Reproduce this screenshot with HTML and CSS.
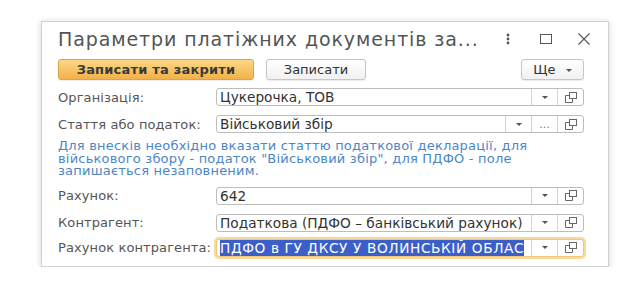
FILE: index.html
```html
<!doctype html>
<html>
<head>
<meta charset="utf-8">
<link rel="stylesheet" href="styles.css">
</head>
<body>
<div class="window">
	<div class="head">
		<div class="title">Параметри платіжних документів за...</div>
		<div class="head_btns">
			<svg class="h_more" width="4" height="12" viewBox="0 0 4 12"><circle cx="2" cy="2" r="1.4" fill="#555"/><circle cx="2" cy="6" r="1.4" fill="#555"/><circle cx="2" cy="10" r="1.4" fill="#555"/></svg>
			<svg class="h_max" width="12" height="10" viewBox="0 0 12 10"><rect x="0.5" y="0.5" width="11" height="9" fill="none" stroke="#555"/></svg>
			<svg class="h_close" width="12" height="12" viewBox="0 0 12 12"><path d="M0.5 0.5 L11.5 11.5 M11.5 0.5 L0.5 11.5" stroke="#555" stroke-width="1.1"/></svg>
		</div>
	</div>
	<div class="toolbar">
		<div class="btn btn_main">Записати та закрити</div>
		<div class="btn btn_save">Записати</div>
		<div class="btn btn_more">Ще <span class="arrow"></span></div>
	</div>
	<div class="form">
		<div class="row">
			<div class="label">Організація:</div>
			<div class="field">
				<div class="value">Цукерочка, ТОВ</div>
				<div class="fbtn"><span class="arrow"></span></div>
				<div class="fbtn"><svg class="open" width="12" height="11" viewBox="0 0 12 11"><rect x="4.5" y="0.5" width="7" height="6" fill="none" stroke="#666"/><path d="M4.5 3.5 H0.5 V10.5 H7.5 V6.5" fill="none" stroke="#666"/></svg></div>
			</div>
		</div>
		<div class="row">
			<div class="label">Стаття або податок:</div>
			<div class="field">
				<div class="value">Військовий збір</div>
				<div class="fbtn"><span class="arrow"></span></div>
				<div class="fbtn dots">...</div>
				<div class="fbtn"><svg class="open" width="12" height="11" viewBox="0 0 12 11"><rect x="4.5" y="0.5" width="7" height="6" fill="none" stroke="#666"/><path d="M4.5 3.5 H0.5 V10.5 H7.5 V6.5" fill="none" stroke="#666"/></svg></div>
			</div>
		</div>
		<div class="info">Для внесків необхідно вказати статтю податкової декларації, для військового збору - податок "Військовий збір", для ПДФО - поле запишається незаповненим.</div>
		<div class="row">
			<div class="label">Рахунок:</div>
			<div class="field">
				<div class="value">642</div>
				<div class="fbtn"><span class="arrow"></span></div>
				<div class="fbtn"><svg class="open" width="12" height="11" viewBox="0 0 12 11"><rect x="4.5" y="0.5" width="7" height="6" fill="none" stroke="#666"/><path d="M4.5 3.5 H0.5 V10.5 H7.5 V6.5" fill="none" stroke="#666"/></svg></div>
			</div>
		</div>
		<div class="row">
			<div class="label">Контрагент:</div>
			<div class="field">
				<div class="value">Податкова (ПДФО – банківський рахунок)</div>
				<div class="fbtn"><span class="arrow"></span></div>
				<div class="fbtn"><svg class="open" width="12" height="11" viewBox="0 0 12 11"><rect x="4.5" y="0.5" width="7" height="6" fill="none" stroke="#666"/><path d="M4.5 3.5 H0.5 V10.5 H7.5 V6.5" fill="none" stroke="#666"/></svg></div>
			</div>
		</div>
		<div class="row row_focus">
			<div class="label">Рахунок контрагента:</div>
			<div class="field focus">
				<div class="value"><span class="sel">ПДФО в ГУ ДКСУ У ВОЛИНСЬКІЙ ОБЛАС</span></div>
				<div class="fbtn"><span class="arrow"></span></div>
				<div class="fbtn"><svg class="open" width="12" height="11" viewBox="0 0 12 11"><rect x="4.5" y="0.5" width="7" height="6" fill="none" stroke="#666"/><path d="M4.5 3.5 H0.5 V10.5 H7.5 V6.5" fill="none" stroke="#666"/></svg></div>
			</div>
		</div>
	</div>
</div>
</body>
</html>
```

FILE: styles.css
```css
*{margin:0; padding:0; box-sizing:border-box;}
body{background:#fff; font-family:"DejaVu Sans", "Liberation Sans", sans-serif; color:#4d4d4d;}

.window{margin:21px 0 0 41px; width:568px; height:246px; background:#fff; border:1px solid #d2d2d2; box-shadow:0 1px 6px rgba(0,0,0,.18); padding:0 24px 0 16px;}

.head{display:flex; align-items:center; height:34px;}
.title{flex:1; font-size:19px; color:#555; white-space:nowrap; letter-spacing:0.9px;}
.head_btns{display:flex; align-items:center;}
.h_more{margin-right:30px;}
.h_max{margin-right:26px;}
.h_close{margin-right:-6px;}

.toolbar{display:flex; height:21px; margin-top:3px;}
.btn{height:21px; line-height:19px; font-size:13px; color:#333; text-align:center; border:1px solid #c6c6c6; border-radius:3px; background:linear-gradient(#fff,#f1f1f1); box-shadow:0 1px 1px rgba(0,0,0,.08);}
.btn_main{width:196px; font-weight:bold; letter-spacing:0.2px; color:#3a3a3a; border-color:#d9a24c; background:linear-gradient(#fcd886,#f2b148);}
.btn_save{width:100px; margin-left:12px;}
.btn_more{width:63px; margin-left:auto;}
.btn_more .arrow{margin-left:6px; vertical-align:middle;}

.arrow{display:inline-block; width:0; height:0; border-left:3px solid transparent; border-right:3px solid transparent; border-top:3px solid #555;}

.form{display:flex; flex-direction:column; gap:9px; margin-top:8px;}
.row{display:flex; align-items:center; height:18px;}
.label{width:158px; flex-shrink:0; font-size:13px; color:#555; white-space:nowrap; letter-spacing:0.1px;}
.field{flex:1; min-width:0; display:flex; height:18px; border:1px solid #bdbdbd; border-radius:3px; background:#fff;}
.value{flex:1; min-width:0; overflow:hidden; white-space:nowrap; font-size:13.7px; line-height:16px; color:#333; padding-left:3px;}
.fbtn{width:26px; flex-shrink:0; display:flex; align-items:center; justify-content:center; border-left:1px solid #d4d4d4;}
.dots{font-size:11px; color:#777; align-items:flex-end; line-height:14px;}

.info{font-size:13px; line-height:12.5px; letter-spacing:0.2px; color:#4d86c4; margin:-2px 0 0 0; padding-right:16px;}

.row_focus{margin-top:-2px;}
.focus{border-color:#f0c87c; box-shadow:0 0 0 2px #f7da9e;}
.sel{background:#3c5ec8; color:#fff; letter-spacing:0.6px;}
```
